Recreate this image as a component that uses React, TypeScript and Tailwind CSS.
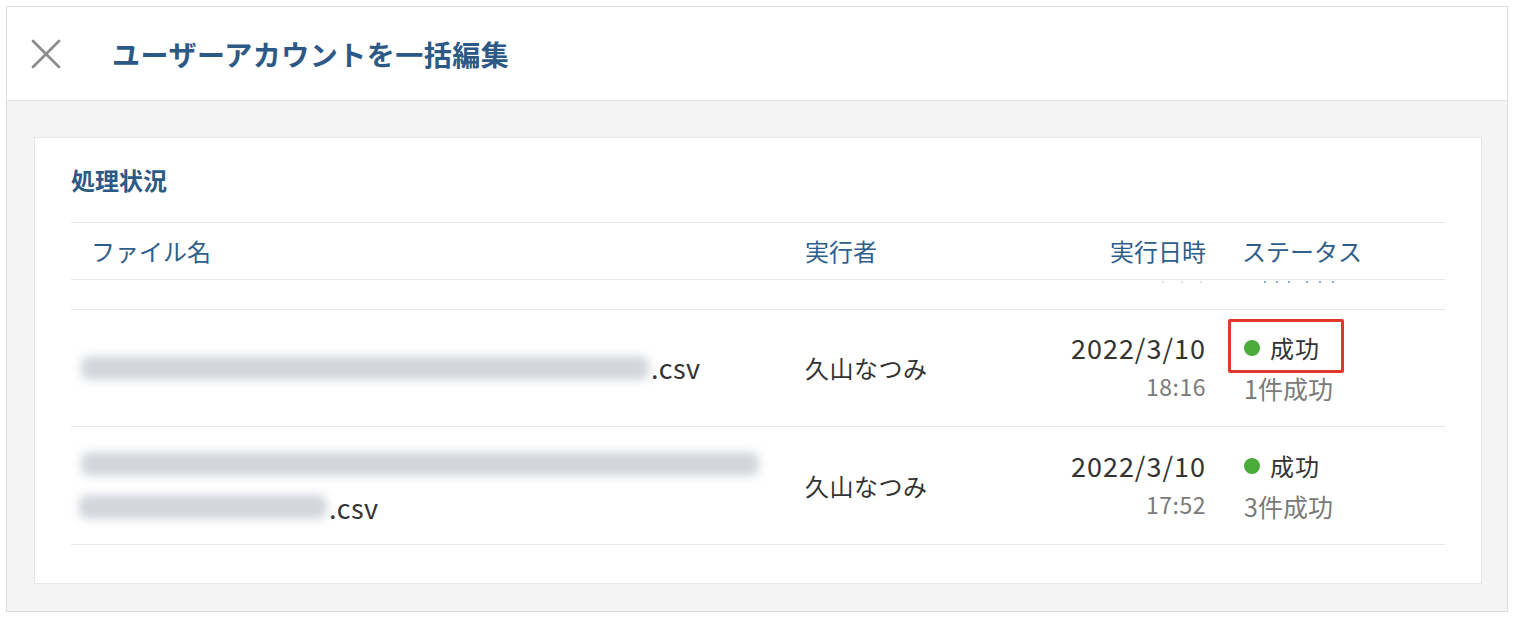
import React from "react";

const F = "font-['Noto_Sans_CJK_JP','Liberation_Sans',sans-serif]";

function Blur({ w }: { w: string }) {
  return (
    <span className={`inline-block h-[24px] ${w} rounded-[8px] bg-[#d2d6dc] blur-[5px] align-middle`} />
  );
}

function Status({ line2, boxed }: { line2: string; boxed?: boolean }) {
  return (
    <div className="flex flex-col leading-[40px] pl-[2px]">
      <div className="flex">
        <span className="relative flex items-center gap-[10px] text-[24px] text-[#333]">
          <span className="w-[16px] h-[16px] rounded-full bg-[#4bab3b]" />
          <span className="tracking-[1px]">成功</span>
          {boxed && (
            <span className="absolute left-[-16px] right-[-24px] top-[-9px] bottom-[-5px] border-[3px] border-[#e5362a] rounded-[2px]" />
          )}
        </span>
      </div>
      <span className="text-[25px] text-[#7a7a7a]">{line2}</span>
    </div>
  );
}

function DateCell({ d, t }: { d: string; t: string }) {
  return (
    <div className="flex flex-col items-end pr-[36px] leading-[40px]">
      <span className="text-[27px] text-[#333] tracking-[1px] mb-[-2px] mt-[-2px]">{d}</span>
      <span className="text-[23px] text-[#7a7a7a] tracking-[0.5px]">{t}</span>
    </div>
  );
}

function Dots({ color, n, gap }: { color: string; n: number; gap: string }) {
  return (
    <div className={`flex ${gap}`}>
      {Array.from({ length: n }).map((_, i) => (
        <span key={i} className={`w-[2px] h-[2px] rounded-full ${color}`} />
      ))}
    </div>
  );
}

export default function App() {
  return (
    <div className={`w-[1520px] h-[626px] bg-white pl-[6px] pr-[12px] pt-[6px] pb-[14px] ${F}`}>
      <div className="h-full flex flex-col border border-[#dcdcdc] shadow-[inset_0_3px_3px_rgba(0,0,0,0.05)]">
        <div className="h-[94px] shrink-0 flex items-center bg-white border-b border-[#e4e4e4] pl-[24px]">
          <svg width="30" height="30" viewBox="0 0 30 30" className="shrink-0">
            <path d="M2 2 L28 28 M28 2 L2 28" stroke="#8c8c8c" strokeWidth="2.8" strokeLinecap="round" />
          </svg>
          <h1 className="ml-[51px] text-[28px] font-bold text-[#2c5985] tracking-[0.5px]">ユーザーアカウントを一括編集</h1>
        </div>
        <div className="flex-1 bg-[#f4f4f4] pl-[27px] pr-[25px] pt-[36px] pb-[27px] flex">
          <div className="flex-1 bg-white border border-[#e6e6e6] pl-[36px] pr-[36px] pt-[26px]">
            <h2 className="text-[24px] leading-[32px] font-bold text-[#2c5985]">処理状況</h2>
            <div className="mt-[26px] border-t border-[#e6e6e6]">
              <div className="grid grid-cols-[734px_201px_236px_201px] h-[57px] items-center border-b border-[#e6e6e6] text-[24px] text-[#2f5e8a]">
                <div className="pl-[20px]">ファイル名</div>
                <div>実行者</div>
                <div className="text-right pr-[36px]">実行日時</div>
                <div>ステータス</div>
              </div>
              <div className="grid grid-cols-[734px_201px_236px_201px] h-[30px] border-b border-[#e6e6e6] items-start pt-[1px]">
                <div />
                <div />
                <div className="flex justify-end pr-[40px]">
                  <Dots color="bg-[#d8d8d8]" n={3} gap="gap-[17px]" />
                </div>
                <div className="flex pl-[22px] gap-[16px]">
                  <Dots color="bg-[#5b8fd6]" n={3} gap="gap-[10px]" />
                  <Dots color="bg-[#5b8fd6]" n={3} gap="gap-[11px]" />
                </div>
              </div>
              <div className="grid grid-cols-[734px_201px_236px_201px] h-[117px] items-center border-b border-[#e6e6e6]">
                <div className="pl-[10px] flex items-center text-[24px] text-[#333]">
                  <Blur w="w-[568px]" />
                  <span className="ml-[2px] text-[27px] tracking-[0.5px]">.csv</span>
                </div>
                <div className="text-[24px] text-[#333] tracking-[0.5px]">久山なつみ</div>
                <DateCell d="2022/3/10" t="18:16" />
                <Status line2="1件成功" boxed />
              </div>
              <div className="grid grid-cols-[734px_201px_236px_201px] h-[118px] items-center border-b border-[#e6e6e6]">
                <div className="pl-[10px] flex flex-col text-[24px] text-[#333] leading-[43px]">
                  <div className="flex items-center h-[43px]">
                    <Blur w="w-[678px]" />
                  </div>
                  <div className="flex items-center h-[43px] -ml-[2px]">
                    <Blur w="w-[248px]" />
                    <span className="ml-[2px] text-[27px] tracking-[0.5px]">.csv</span>
                  </div>
                </div>
                <div className="text-[24px] text-[#333] tracking-[0.5px]">久山なつみ</div>
                <DateCell d="2022/3/10" t="17:52" />
                <Status line2="3件成功" />
              </div>
            </div>
          </div>
        </div>
      </div>
    </div>
  );
}
